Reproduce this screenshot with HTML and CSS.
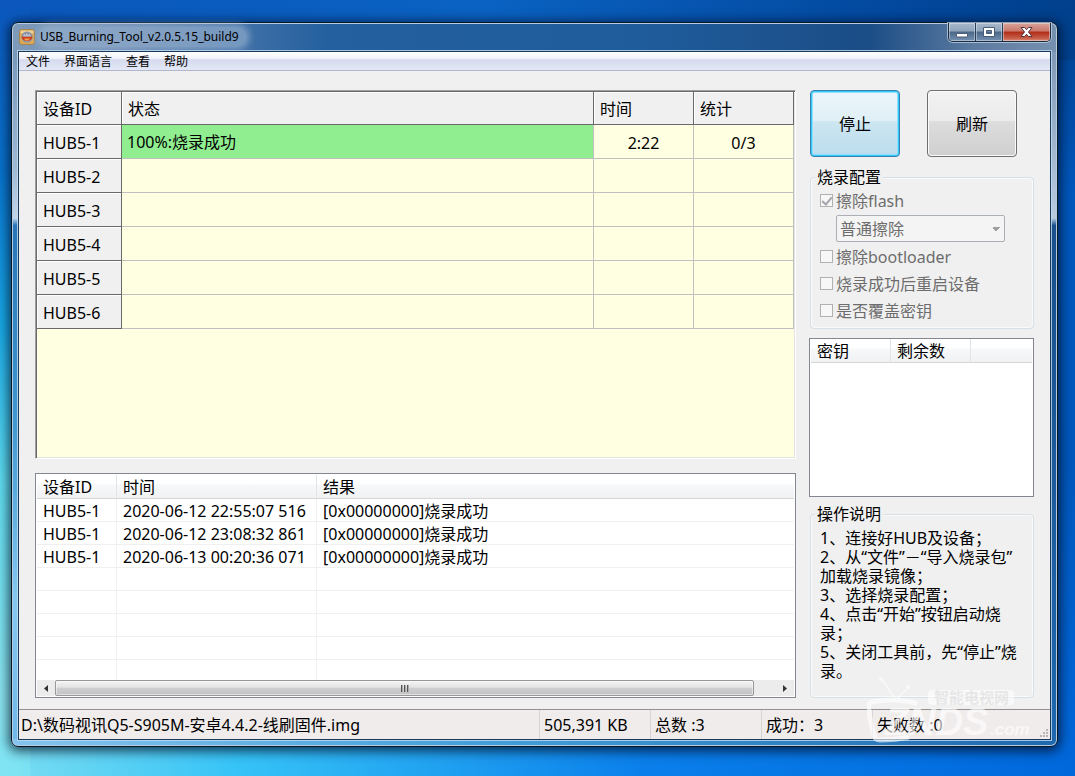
FILE: index.html
```html
<!DOCTYPE html>
<html lang="zh-CN">
<head>
<meta charset="utf-8">
<title>USB_Burning_Tool_v2.0.5.15_build9</title>
<link rel="stylesheet" href="styles.css">
</head>
<body>
<div class="window">
  <header class="titlebar">
    <svg class="app-icon" width="16" height="16" viewBox="0 0 16 16" aria-hidden="true">
      <rect x="0.5" y="0.5" width="15" height="15" rx="2.5" fill="#d9a95c" stroke="#a88448"/>
      <rect x="1.5" y="1.5" width="13" height="3" rx="1" fill="#ecd09a"/>
      <circle cx="8" cy="8" r="5.500" fill="#8a93a4"/>
      <path d="M2.500 7.500h11a5.500 4.500 0 0 1-11 0z" fill="#cf3c20"/>
      <path d="M4 7.500l1.500-3 1 2 1.500-2.500 1.500 2.500 1-2 1.500 3z" fill="#b9c3d0"/>
      <path d="M5 9.500h6l-1.500 2h-3z" fill="#f3a04c"/>
    </svg>
    <h1 class="caption">USB_Burning_Tool_v2.0.5.15_build9</h1>
    <div class="controls">
      <button class="ctl ctl-min" type="button" aria-label="最小化"><svg width="12" height="6" viewBox="0 0 12 6"><rect x="0.5" y="1.500" width="11" height="3.500" rx="0.500" fill="#fff" stroke="#4b5d75"/></svg></button>
      <button class="ctl ctl-max" type="button" aria-label="最大化"><svg width="12" height="10" viewBox="0 0 12 10"><path fill-rule="evenodd" d="M.5.5h11v9H.5zM3.500 3.500v3h5v-3z" fill="#fff" stroke="#4b5d75"/></svg></button>
      <button class="ctl ctl-close" type="button" aria-label="关闭"><svg width="13" height="10" viewBox="0 0 13 10"><path d="M1 .5h3.500l2 2.200 2-2.200H12L8.500 5l3.500 4.500H8.500l-2-2.200-2 2.200H1L4.500 5z" fill="#fff" stroke="#53343c"/></svg></button>
    </div>
  </header>

  <div class="client">
    <nav class="menu">
      <button type="button">文件</button>
      <button type="button">界面语言</button>
      <button type="button">查看</button>
      <button type="button">帮助</button>
    </nav>

    <main class="content">
      <section class="left">
        <div class="devices">
          <table class="device-table">
            <colgroup><col class="c-id"><col><col class="c-num"><col class="c-num"></colgroup>
            <thead><tr><th>设备ID</th><th>状态</th><th>时间</th><th>统计</th></tr></thead>
            <tbody>
              <tr><th>HUB5-1</th><td class="ok">100%:烧录成功</td><td class="num">2:22</td><td class="num">0/3</td></tr>
              <tr><th>HUB5-2</th><td></td><td></td><td></td></tr>
              <tr><th>HUB5-3</th><td></td><td></td><td></td></tr>
              <tr><th>HUB5-4</th><td></td><td></td><td></td></tr>
              <tr><th>HUB5-5</th><td></td><td></td><td></td></tr>
              <tr><th>HUB5-6</th><td></td><td></td><td></td></tr>
            </tbody>
          </table>
        </div>

        <div class="log">
          <table class="list-table">
            <colgroup><col class="l-id"><col class="l-time"><col></colgroup>
            <thead><tr><th>设备ID</th><th>时间</th><th>结果</th></tr></thead>
            <tbody>
              <tr><td>HUB5-1</td><td>2020-06-12 22:55:07 516</td><td>[0x00000000]烧录成功</td></tr>
              <tr><td>HUB5-1</td><td>2020-06-12 23:08:32 861</td><td>[0x00000000]烧录成功</td></tr>
              <tr><td>HUB5-1</td><td>2020-06-13 00:20:36 071</td><td>[0x00000000]烧录成功</td></tr>
              <tr><td></td><td></td><td></td></tr>
              <tr><td></td><td></td><td></td></tr>
              <tr><td></td><td></td><td></td></tr>
              <tr><td></td><td></td><td></td></tr>
              <tr><td></td><td></td><td></td></tr>
            </tbody>
          </table>
          <div class="scrollbar">
            <button type="button" class="arrow" aria-label="向左"><svg width="4" height="7" viewBox="0 0 4 7"><path d="M4 0v7L0 3.500z" fill="#333"/></svg></button>
            <div class="thumb"><i></i><i></i><i></i></div>
            <div class="track"></div>
            <button type="button" class="arrow" aria-label="向右"><svg width="4" height="7" viewBox="0 0 4 7"><path d="M0 0v7l4-3.500z" fill="#333"/></svg></button>
          </div>
        </div>
      </section>

      <aside class="right">
        <div class="actions">
          <button type="button" class="btn btn-active">停止</button>
          <button type="button" class="btn">刷新</button>
        </div>

        <fieldset class="group config">
          <legend>烧录配置</legend>
          <label class="check"><input type="checkbox" checked disabled>擦除flash</label>
          <select class="mode" aria-label="擦除方式" disabled><option>普通擦除</option></select>
          <label class="check"><input type="checkbox" disabled>擦除bootloader</label>
          <label class="check"><input type="checkbox" disabled>烧录成功后重启设备</label>
          <label class="check"><input type="checkbox" disabled>是否覆盖密钥</label>
        </fieldset>

        <div class="keys">
          <table class="list-table">
            <colgroup><col class="l-id"><col class="l-id"><col></colgroup>
            <thead><tr><th>密钥</th><th>剩余数</th><th></th></tr></thead>
          </table>
        </div>

        <fieldset class="group help">
          <legend>操作说明</legend>
          <p>1、连接好HUB及设备；</p>
          <p>2、从“文件”－“导入烧录包”<br>加载烧录镜像；</p>
          <p>3、选择烧录配置；</p>
          <p>4、点击“开始”按钮启动烧<br>录；</p>
          <p>5、关闭工具前，先“停止”烧<br>录。</p>
        </fieldset>
      </aside>
    </main>

    <footer class="status">
      <span class="path">D:\数码视讯Q5-S905M-安卓4.4.2-线刷固件.img</span>
      <span class="cell">505,391 KB</span>
      <span class="cell">总数 :3</span>
      <span class="cell">成功：3</span>
      <span class="cell last">失败数 :0</span>
      <svg class="grip" width="9" height="9" viewBox="0 0 9 9" aria-hidden="true"><path d="M6 0h2v2H6zM3 3h2v2H3zM6 3h2v2H6zM0 6h2v2H0zM3 6h2v2H3zM6 6h2v2H6z" fill="#b9b6b5"/></svg>
    </footer>
  </div>

  <svg class="watermark" width="170" height="70" viewBox="0 0 170 70" aria-hidden="true">
    <g fill="none" stroke="#fff" stroke-width="2">
      <path d="M15 4l13 20M42 12L30 24" stroke-width="1.500"/>
      <path d="M50 29C38 24 18 24 5 27c-4 1-4 4-3 9 1 9 3 17 5 25 1 3 3 4 6 4 10 0 20-1 29-3" stroke-width="5"/>
    </g>
    <circle cx="14" cy="4" r="2" fill="#fff"/><circle cx="41" cy="12" r="2" fill="#fff"/>
    <rect x="61" y="15" width="86" height="15" rx="4" fill="#fff"/>
    <text class="wm-cn" x="67" y="28">智能电视网</text>
    <text class="wm-name" x="18" y="60">ZNDS</text>
    <text class="wm-com" x="123" y="60">.com</text>
  </svg>
</div>
</body>
</html>
```
FILE: styles.css
```css
* { box-sizing: border-box; }

body {
  margin: 0;
  min-height: 100vh;
  padding: 22px 17px 29px 11px;
  display: flex;
  font: 16px/20px "Noto Sans", "Noto Sans CJK SC", sans-serif;
  color: #000;
  background:
    linear-gradient(90deg, rgba(130, 228, 242, .95) 0, rgba(60, 205, 250, .9) 22%, rgba(20, 150, 250, .5) 60%, rgba(0, 100, 220, 0) 100%) bottom / 100% 40px no-repeat,
    linear-gradient(#0b57bd 0, #0873ce 22%, #18a8e4 42%, #5fdcee 62%, #8ae4ee 90%, #80e4f4 100%) left / 30px 100% no-repeat,
    linear-gradient(90deg, #0a57bb, #0a62c2 45%, #02479c 85%, #00408c) top / 100% 60px no-repeat,
    linear-gradient(#00408c, #0057bc 25%, #0058bc 60%, #0068dc);
}

button, select, input { font: inherit; color: inherit; margin: 0; }

.window {
  position: relative;
  flex: 1;
  min-width: 0;
  display: flex;
  flex-direction: column;
  padding: 0 6px 6px;
  border: 1px solid #0a1826;
  border-radius: 7px;
  box-shadow: 0 2px 12px 2px rgba(0, 10, 30, .75), inset 0 0 0 1px #b4cde4;
  background:
    linear-gradient(90deg, #7f9bba 0, #6486b0 12%, #24609f 30%, #1f5c9c 60%, #1b4d86 82%, #5c7ba0 92%, #7690b0 100%) top / 100% 29px no-repeat,
    linear-gradient(90deg, #84c4ee, #43a0da 45%, #1f68ae) bottom / 100% 7px no-repeat,
    linear-gradient(#7090b4 0, #9fb8d2 20%, #c2d5e8 27%, #2876b8 28%, #3f98d0 55%, #84c8f0 80%, #70b8e8 100%) left / 10px 100% no-repeat,
    linear-gradient(#7690b0 0, #b8cce0 27%, #194f8c 28%, #1f68ae 100%) right / 10px 100% no-repeat;
}

.titlebar {
  display: flex;
  align-items: flex-start;
  height: 28px;
}
.app-icon { margin: 6px 4px 0 1px; }
.caption {
  margin: 4px 0 0;
  padding: 0 8px 0 1px;
  font-size: 12px;
  line-height: 20px;
  font-weight: 400;
  border-radius: 10px;
  background: rgba(160, 184, 212, .55);
  box-shadow: 0 0 6px 3px rgba(160, 184, 212, .55);
}
.controls {
  display: flex;
  margin-left: auto;
  height: 19px;
  border: 1px solid #1d2b3f;
  border-top: 0;
  border-radius: 0 0 5px 5px;
  box-shadow: 0 0 0 1px rgba(200, 216, 234, .7);
  overflow: hidden;
}
.ctl {
  display: flex;
  align-items: center;
  justify-content: center;
  width: 27px;
  padding: 0;
  border: 0;
  border-right: 1px solid #2b3d56;
  box-shadow: inset 0 0 0 1px rgba(230, 240, 250, .45);
  background: linear-gradient(#a9b9cb 0, #8ea3bb 45%, #4b6787 50%, #7692b2 100%);
}
.ctl-min svg { margin-top: 6px; }
.ctl-close {
  width: 47px;
  border-right: 0;
  background: linear-gradient(#d9a49b 0, #c9776b 45%, #b02c18 50%, #c8604a 85%, #dc8f78 100%);
}

.client {
  flex: 1;
  display: flex;
  flex-direction: column;
  border: 1px solid #1a3a5c;
  box-shadow: 0 0 0 1px rgba(196, 220, 240, .8);
  background: #f0f0f0;
}

.menu {
  display: flex;
  gap: 14px;
  height: 19px;
  padding: 0 7px;
  border-bottom: 1px solid #b2b7d0;
  background: linear-gradient(#fff 0, #eef1f9 40%, #d5dbee 42%, #e3e8f6 100%);
}
.menu button {
  padding: 2px 0 0;
  border: 0;
  background: none;
  font-size: 12px;
  line-height: 16px;
}

.content {
  flex: 1;
  display: flex;
  gap: 13px;
  padding: 19px 16px 11px;
}
.left { flex: 1; min-width: 0; display: flex; flex-direction: column; gap: 14px; }
.right { width: 225px; display: flex; flex-direction: column; }

table { width: 100%; border-collapse: separate; border-spacing: 0; table-layout: fixed; }
th, td { padding: 0 0 0 6px; text-align: left; font-weight: 400; white-space: nowrap; overflow: hidden; }

.devices {
  flex: 1;
  padding: 1px;
  border: 1px solid;
  border-color: #a0a0a0 #fff #fff #a0a0a0;
  box-shadow: inset 1px 1px 0 #696969, inset -1px -1px 0 #e3e3e3;
  background: #ffffe1;
}
.c-id { width: 85px; }
.c-num { width: 100px; }
.device-table th, .device-table .num { padding-top: 2px; }
.device-table th {
  height: 34px;
  background: #f0f0f0;
  border-right: 1px solid #696969;
  border-bottom: 1px solid #696969;
  box-shadow: inset 1px 1px 0 #fff;
}
.device-table thead th { height: 33px; }
.device-table td {
  padding-left: 5px;
  border-right: 1px solid #c0c0c0;
  border-bottom: 1px solid #c0c0c0;
}
.device-table .ok { background: #90ee90; }
.device-table .num { padding-left: 0; text-align: center; }

.log, .keys { border: 1px solid #828790; background: #fff; }
.log { padding: 1px; }
.l-id { width: 80px; }
.l-time { width: 200px; }
.list-table th {
  height: 24px;
  border-right: 1px solid #e2e4e7;
  border-bottom: 1px solid #d5d5d5;
  background: linear-gradient(#fff 0, #fff 40%, #f7f8fa 42%, #f1f2f4 100%);
}
.list-table td {
  height: 23px;
  padding-top: 2px;
  border-right: 1px solid #f0f0f0;
  border-bottom: 1px solid #f0f0f0;
}
.list-table th:last-child, .list-table td:last-child { border-right: 0; }
.list-table tr:last-child td { height: 20px; border-bottom: 0; }

.scrollbar { display: flex; height: 16px; background: #ececec; }
.arrow {
  display: flex;
  align-items: center;
  justify-content: center;
  width: 18px;
  padding: 0;
  border: 0;
  background: none;
}
.thumb {
  flex: 1;
  display: flex;
  align-items: center;
  justify-content: center;
  gap: 1px;
  border: 1px solid #979797;
  border-radius: 2px;
  background: linear-gradient(#f4f4f4 0, #e4e4e4 45%, #cfcfcf 50%, #c2c2c6 100%);
  box-shadow: inset 0 0 0 1px rgba(255, 255, 255, .5);
}
.thumb i { width: 2px; height: 7px; background: linear-gradient(90deg, #555 50%, #aaa 50%); }
.track { width: 22px; }

.actions { display: flex; gap: 27px; padding-left: 1px; }
.btn {
  width: 90px;
  height: 67px;
  padding: 0;
  border: 1px solid #707070;
  border-radius: 4px;
  background: linear-gradient(#f2f2f2 0, #ebebeb 46%, #dddddd 47%, #cfcfcf 100%);
  box-shadow: inset 0 0 0 1px #fafafa;
}
.btn-active {
  border-color: #3c7fb1;
  background: linear-gradient(#ecf5fc 0, #e0f0f6 46%, #cde6f1 47%, #bcdcee 100%);
  box-shadow: inset 0 0 0 1px #30c8f8, inset 0 0 0 2px #90e0fa;
}

.group {
  min-width: 0;
  margin: 0 0 0 1px;
  padding: 0 0 0 9px;
  border: 1px solid #d5dfe5;
  border-radius: 4px;
  box-shadow: inset 0 0 0 1px #fafafa;
}
.group legend {
  margin-left: -5px;
  padding: 0 2px;
  line-height: 20px;
  background: #f0f0f0;
}
.config {
  display: flex;
  flex-direction: column;
  height: 162px;
  margin-top: 10px;
  color: #6d6d6d;
}
.config legend { color: #000; }
.check { display: flex; align-items: center; height: 27px; gap: 3px; }
.check input {
  appearance: none;
  display: grid;
  place-items: center;
  width: 13px;
  height: 13px;
  border: 1px solid #b1b1b1;
  background: #f7f7f7;
}
.check input:checked::before {
  content: "";
  width: 4px;
  height: 8px;
  margin-bottom: 2px;
  border: solid #a4a6ad;
  border-width: 0 2px 2px 0;
  transform: rotate(40deg);
}
.mode {
  appearance: none;
  width: 169px;
  height: 27px;
  margin: 1px 0 1px 16px;
  padding: 0 3px;
  border: 1px solid #a9afb4;
  border-radius: 2px;
  color: #6d6d6d;
  opacity: 1;
  background:
    conic-gradient(from -45deg at 50% 4px, #a0a0a0 90deg, transparent 0) right 4px center / 8px 4px no-repeat,
    #f4f4f4;
}
.keys { height: 159px; margin: 9px 0 7px; padding: 0 1px; }
.help { flex: 1; }
.help p { margin: 0; line-height: 19px; white-space: nowrap; }
.help legend + p { margin-top: 5px; }

.status {
  position: relative;
  display: flex;
  height: 30px;
  border-top: 1px solid #919191;
  line-height: 31px;
  background: #f0eceb;
  white-space: nowrap;
}
.path { flex: 1; min-width: 0; padding-left: 2px; overflow: hidden; }
.cell { width: 111px; padding-left: 4px; border-left: 1px solid #d7d4d3; }
.last { width: 178px; }
.grip { position: absolute; right: 1px; bottom: 1px; }

.watermark { position: absolute; right: 20px; bottom: 1px; opacity: .6; }
.wm-cn { font: 700 15px "Noto Sans CJK SC", sans-serif; fill: #e2e2e2; }
.wm-name { font: italic 900 38px "Liberation Sans", sans-serif; fill: #fff; }
.wm-com { font: italic 700 17px "Liberation Sans", sans-serif; fill: #fff; }
```
